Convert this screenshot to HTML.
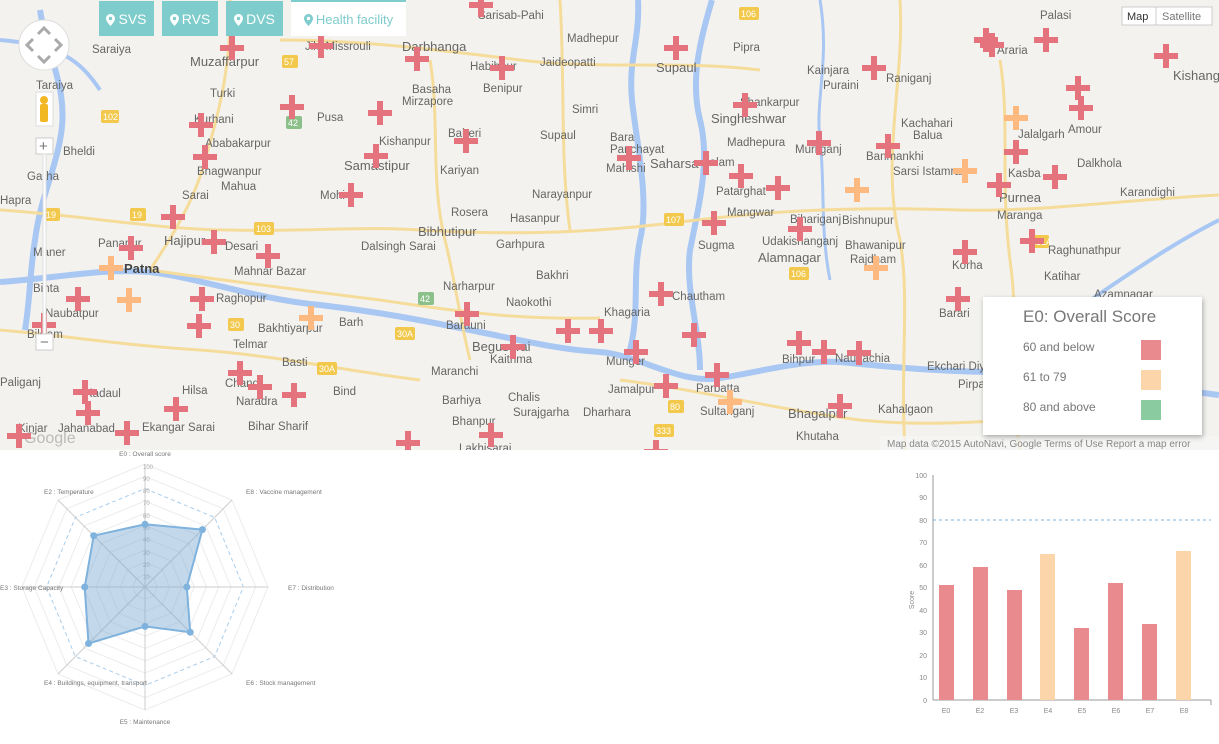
<!DOCTYPE html>
<html><head><meta charset="utf-8">
<style>
html,body{margin:0;padding:0;width:1219px;height:744px;overflow:hidden;background:#fff;font-family:"Liberation Sans",sans-serif;}
#map{position:absolute;left:0;top:0;width:1219px;height:450px;background:#f3f2ee;overflow:hidden;}
.btn{position:absolute;top:1px;height:35px;background:#7ecccb;color:#fff;font-size:14px;line-height:36px;text-align:center;}
.btn svg{vertical-align:-2px;margin-right:3px}
.legend{position:absolute;left:983px;top:297px;width:219px;height:138px;background:#fff;box-shadow:1px 2px 5px rgba(0,0,0,.3);color:#777;}
.legend .t{position:absolute;left:40px;top:10px;font-size:17px;}
.legend .r{position:absolute;left:40px;font-size:12px;}
.legend .s{position:absolute;left:158px;width:20px;height:20px;}
</style></head><body>
<div id="map">
<svg width="1219" height="450" style="position:absolute;left:0;top:0">
<g fill="none" stroke="#a9c7f3" stroke-width="6" stroke-linejoin="round">
<path d="M0,282 C60,278 100,268 150,272 C200,278 260,300 320,305 C380,312 420,320 470,330 C520,340 560,350 600,352 C640,355 680,385 720,378 C760,372 800,360 840,362 C880,366 940,372 1000,372 C1060,370 1140,385 1219,395"/>
<path d="M638,0 C640,40 628,60 632,100 C636,140 650,200 640,240 C632,280 640,310 630,350"/>
<path d="M712,0 C700,40 690,80 700,120 C710,160 700,200 690,250 C685,290 700,330 700,370"/>
<path d="M40,10 C48,60 70,90 60,140 C55,170 40,200 35,240 C30,270 30,300 25,330"/>
<path d="M1219,220 C1180,240 1150,260 1120,280 C1090,300 1060,320 1040,345" stroke-width="4"/>
<path d="M0,40 C60,45 80,60 100,90" stroke-width="4"/>
<path d="M820,0 C830,60 815,100 820,140 C825,180 820,230 830,280" stroke-width="3"/>
</g>
<g fill="none" stroke="#f5dc9a" stroke-width="3">
<path d="M0,210 C80,215 160,230 230,230 C300,232 360,226 420,230 C520,236 600,232 680,222 C760,212 840,206 960,210 C1040,212 1120,200 1219,195"/>
<path d="M230,0 C232,60 220,110 205,160 C195,200 170,240 150,270"/>
<path d="M150,270 C220,280 300,290 380,300 C460,312 520,320 600,318"/>
<path d="M560,0 C565,80 560,160 570,230"/>
<path d="M430,60 C440,120 430,180 445,240 C455,280 460,320 470,360"/>
<path d="M900,0 C905,80 880,160 900,240 C910,300 900,360 905,450"/>
<path d="M1000,60 C1010,120 1000,180 1010,260 C1020,330 1010,400 1020,450"/>
<path d="M0,330 C60,335 120,345 200,350 C280,356 340,370 420,380"/>
<path d="M620,380 C700,390 780,410 860,420 C940,428 1020,420 1100,410"/>
<path d="M280,40 C360,40 440,50 520,60 C600,70 680,60 760,70"/>
</g>
<g font-family="Liberation Sans,sans-serif" font-size="11.5" fill="#666">
<text x="478" y="19">Sarisab-Pahi</text><text x="305" y="50">Jile Missrouli</text><text x="402" y="51" font-size="13">Darbhanga</text>
<text x="92" y="53">Saraiya</text><text x="190" y="66" font-size="13">Muzaffarpur</text><text x="567" y="42">Madhepur</text>
<text x="733" y="51">Pipra</text><text x="656" y="72" font-size="13">Supaul</text><text x="807" y="74">Kainjara</text>
<text x="540" y="66">Jaideopatti</text><text x="470" y="70">Habibpur</text><text x="412" y="93">Basaha</text><text x="402" y="105">Mirzapore</text>
<text x="36" y="89">Taraiya</text><text x="210" y="97">Turki</text><text x="317" y="121">Pusa</text><text x="483" y="92">Benipur</text>
<text x="572" y="113">Simri</text><text x="740" y="106">Shankarpur</text><text x="711" y="123" font-size="13">Singheshwar</text><text x="823" y="89">Puraini</text>
<text x="886" y="82">Raniganj</text><text x="997" y="54">Araria</text><text x="1040" y="19">Palasi</text><text x="1173" y="80" font-size="13">Kishanganj</text>
<text x="1068" y="133">Amour</text><text x="1018" y="138">Jalalgarh</text><text x="901" y="127">Kachahari</text><text x="913" y="139">Balua</text>
<text x="194" y="123">Kurhani</text><text x="205" y="147">Ababakarpur</text><text x="197" y="175">Bhagwanpur</text><text x="63" y="155">Bheldi</text>
<text x="379" y="145">Kishanpur</text><text x="448" y="137">Baheri</text><text x="540" y="139">Supaul</text><text x="610" y="141">Bara</text>
<text x="610" y="153">Panchayat</text><text x="650" y="168" font-size="13">Saharsa</text><text x="702" y="166">Salam</text><text x="727" y="146">Madhepura</text>
<text x="795" y="153">Murliganj</text><text x="866" y="160">Banmankhi</text><text x="893" y="175">Sarsi Istamrar</text><text x="1008" y="177">Kasba</text>
<text x="1077" y="167">Dalkhola</text><text x="1120" y="196">Karandighi</text><text x="999" y="202" font-size="13">Purnea</text><text x="997" y="219">Maranga</text>
<text x="27" y="180">Garha</text><text x="221" y="190">Mahua</text><text x="182" y="199">Sarai</text><text x="344" y="170" font-size="13">Samastipur</text>
<text x="440" y="174">Kariyan</text><text x="532" y="198">Narayanpur</text><text x="606" y="172">Mahishi</text><text x="716" y="195">Patarghat</text>
<text x="842" y="224">Bishnupur</text><text x="0" y="204">Hapra</text><text x="320" y="199">Mohi</text><text x="451" y="216">Rosera</text>
<text x="510" y="222">Hasanpur</text><text x="727" y="216">Mangwar</text><text x="790" y="223">Bihariganj</text><text x="418" y="236" font-size="13">Bibhutipur</text>
<text x="496" y="248">Garhpura</text><text x="361" y="250">Dalsingh Sarai</text><text x="698" y="249">Sugma</text><text x="762" y="245">Udakishanganj</text>
<text x="845" y="249">Bhawanipur</text><text x="850" y="263">Rajdham</text><text x="758" y="262" font-size="13">Alamnagar</text><text x="1048" y="254">Raghunathpur</text>
<text x="33" y="256">Maner</text><text x="98" y="247">Panapur</text><text x="164" y="245" font-size="13">Hajipur</text><text x="225" y="250">Desari</text>
<text x="124" y="273" font-size="13" font-weight="bold" fill="#444">Patna</text><text x="234" y="275">Mahnar Bazar</text><text x="536" y="279">Bakhri</text><text x="952" y="269">Korha</text>
<text x="1044" y="280">Katihar</text><text x="33" y="292">Bihta</text><text x="216" y="302">Raghopur</text><text x="443" y="290">Narharpur</text>
<text x="506" y="306">Naokothi</text><text x="604" y="316">Khagaria</text><text x="672" y="300">Chautham</text><text x="1094" y="298">Azamnagar</text>
<text x="45" y="317">Naubatpur</text><text x="258" y="332">Bakhtiyarpur</text><text x="339" y="326">Barh</text><text x="446" y="329">Barauni</text>
<text x="939" y="317">Barari</text><text x="233" y="348">Telmar</text><text x="27" y="338">Bikram</text><text x="472" y="351" font-size="13">Begusarai</text>
<text x="490" y="363">Kaithma</text><text x="606" y="365">Munger</text><text x="282" y="366">Basti</text><text x="782" y="363">Bihpur</text>
<text x="835" y="362">Naugachia</text><text x="927" y="370">Ekchari Diyara</text><text x="0" y="386">Paliganj</text><text x="431" y="375">Maranchi</text>
<text x="225" y="387">Chandi</text><text x="333" y="395">Bind</text><text x="608" y="393">Jamalpur</text><text x="696" y="392">Parbatta</text>
<text x="958" y="388">Pirpainti</text><text x="85" y="397">Kadaul</text><text x="182" y="394">Hilsa</text><text x="236" y="405">Naradra</text>
<text x="442" y="404">Barhiya</text><text x="508" y="401">Chalis</text><text x="788" y="418" font-size="13">Bhagalpur</text><text x="18" y="432">Kinjar</text>
<text x="58" y="432">Jahanabad</text><text x="142" y="431">Ekangar Sarai</text><text x="248" y="430">Bihar Sharif</text><text x="513" y="416">Surajgarha</text>
<text x="583" y="416">Dharhara</text><text x="700" y="415">Sultanganj</text><text x="878" y="413">Kahalgaon</text><text x="452" y="425">Bhanpur</text>
<text x="796" y="440">Khutaha</text><text x="459" y="452">Lakhisarai</text><text x="24" y="443" font-size="16" fill="#bbb">Google</text>
</g>
<g font-family="Liberation Sans,sans-serif" font-size="9" fill="#fff">
<rect x="101" y="110" width="18" height="13" fill="#f2c94c" rx="2"/><text x="103" y="120">102</text>
<rect x="282" y="55" width="16" height="13" fill="#f2c94c" rx="2"/><text x="284" y="65">57</text>
<rect x="286" y="116" width="16" height="13" fill="#8cc08a" rx="2"/><text x="288" y="126">42</text>
<rect x="739" y="7" width="20" height="13" fill="#f2c94c" rx="2"/><text x="741" y="17">106</text>
<rect x="1157" y="7" width="20" height="13" fill="#f2c94c" rx="2"/><text x="1159" y="17">106</text>
<rect x="44" y="208" width="16" height="13" fill="#f2c94c" rx="2"/><text x="46" y="218">19</text>
<rect x="130" y="208" width="16" height="13" fill="#f2c94c" rx="2"/><text x="132" y="218">19</text>
<rect x="254" y="222" width="20" height="13" fill="#f2c94c" rx="2"/><text x="256" y="232">103</text>
<rect x="664" y="213" width="20" height="13" fill="#f2c94c" rx="2"/><text x="666" y="223">107</text>
<rect x="789" y="267" width="20" height="13" fill="#f2c94c" rx="2"/><text x="791" y="277">106</text>
<rect x="418" y="292" width="16" height="13" fill="#8cc08a" rx="2"/><text x="420" y="302">42</text>
<rect x="228" y="318" width="16" height="13" fill="#f2c94c" rx="2"/><text x="230" y="328">30</text>
<rect x="395" y="327" width="20" height="13" fill="#f2c94c" rx="2"/><text x="397" y="337">30A</text>
<rect x="317" y="362" width="20" height="13" fill="#f2c94c" rx="2"/><text x="319" y="372">30A</text>
<rect x="668" y="400" width="16" height="13" fill="#f2c94c" rx="2"/><text x="670" y="410">80</text>
<rect x="1029" y="235" width="20" height="13" fill="#f2c94c" rx="2"/><text x="1031" y="245">131A</text>
<rect x="654" y="424" width="20" height="13" fill="#f2c94c" rx="2"/><text x="656" y="434">333</text>
</g>
<defs>
<path id="c" d="M-3,-12h6v9h9v6h-9v9h-6v-9h-9v-6h9z"/>
</defs>
<g fill="#e5737d">
<use href="#c" x="481" y="5"/><use href="#c" x="232" y="48"/><use href="#c" x="321" y="46"/><use href="#c" x="417" y="59"/><use href="#c" x="502" y="68"/><use href="#c" x="676" y="48"/>
<use href="#c" x="292" y="107"/><use href="#c" x="380" y="113"/><use href="#c" x="201" y="125"/><use href="#c" x="205" y="157"/><use href="#c" x="466" y="141"/><use href="#c" x="376" y="156"/>
<use href="#c" x="351" y="195"/><use href="#c" x="173" y="217"/><use href="#c" x="214" y="242"/><use href="#c" x="268" y="256"/><use href="#c" x="131" y="248"/><use href="#c" x="78" y="299"/>
<use href="#c" x="202" y="299"/><use href="#c" x="199" y="326"/><use href="#c" x="44" y="325"/><use href="#c" x="467" y="314"/><use href="#c" x="513" y="347"/><use href="#c" x="568" y="331"/>
<use href="#c" x="601" y="331"/><use href="#c" x="636" y="352"/><use href="#c" x="661" y="294"/><use href="#c" x="694" y="335"/><use href="#c" x="629" y="158"/><use href="#c" x="706" y="163"/>
<use href="#c" x="741" y="176"/><use href="#c" x="745" y="105"/><use href="#c" x="778" y="188"/><use href="#c" x="819" y="143"/><use href="#c" x="888" y="146"/><use href="#c" x="874" y="68"/>
<use href="#c" x="714" y="223"/><use href="#c" x="800" y="229"/><use href="#c" x="799" y="343"/><use href="#c" x="824" y="352"/><use href="#c" x="859" y="353"/><use href="#c" x="717" y="375"/>
<use href="#c" x="666" y="386"/><use href="#c" x="840" y="406"/><use href="#c" x="986" y="40"/><use href="#c" x="992" y="45"/><use href="#c" x="1046" y="40"/><use href="#c" x="1166" y="56"/>
<use href="#c" x="1078" y="88"/><use href="#c" x="1081" y="108"/><use href="#c" x="1016" y="152"/><use href="#c" x="999" y="185"/><use href="#c" x="1055" y="177"/><use href="#c" x="965" y="252"/>
<use href="#c" x="1032" y="241"/><use href="#c" x="958" y="299"/><use href="#c" x="240" y="373"/><use href="#c" x="260" y="387"/><use href="#c" x="294" y="395"/><use href="#c" x="85" y="392"/>
<use href="#c" x="88" y="413"/><use href="#c" x="176" y="409"/><use href="#c" x="127" y="433"/><use href="#c" x="408" y="443"/><use href="#c" x="491" y="435"/><use href="#c" x="656" y="452"/><use href="#c" x="19" y="436"/>
</g>
<g fill="#fdb97f">
<use href="#c" x="1016" y="118"/><use href="#c" x="965" y="171"/><use href="#c" x="857" y="190"/><use href="#c" x="876" y="268"/><use href="#c" x="111" y="268"/><use href="#c" x="129" y="300"/><use href="#c" x="311" y="318"/><use href="#c" x="730" y="402"/>
</g>
<circle cx="44" cy="45" r="25" fill="#fff" stroke="#ddd"/>
<g stroke="#aaa" stroke-width="3" fill="none"><path d="M38,34l6,-6 6,6M38,56l6,6 6,-6M33,39l-6,6 6,6M55,39l6,6 -6,6"/></g>
<rect x="36" y="92" width="17" height="34" fill="#fff" stroke="#ddd"/>
<circle cx="44" cy="100" r="4" fill="#f2b824"/><rect x="40" y="104" width="8" height="18" rx="2" fill="#f2b824"/>
<rect x="36" y="138" width="17" height="16" fill="#fff" stroke="#ccc"/><text x="39" y="151" font-size="15" fill="#777" font-family="Liberation Sans">+</text>
<rect x="43" y="154" width="3" height="180" fill="#fff" stroke="#ddd"/>
<rect x="36" y="334" width="17" height="16" fill="#fff" stroke="#ccc"/><text x="40" y="347" font-size="15" fill="#777" font-family="Liberation Sans">−</text>
<rect x="1122" y="7" width="90" height="18" fill="#fff" stroke="#ccc"/><line x1="1156" y1="7" x2="1156" y2="25" stroke="#ccc"/>
<text x="1127" y="20" font-size="11" fill="#333" font-family="Liberation Sans">Map</text><text x="1162" y="20" font-size="11" fill="#777" font-family="Liberation Sans">Satellite</text>
<rect x="880" y="436" width="339" height="14" fill="rgba(245,245,245,.8)"/>
<text x="887" y="447" font-size="10" fill="#888" font-family="Liberation Sans">Map data ©2015 AutoNavi, Google    Terms of Use    Report a map error</text>
</svg>
<div class="btn" style="left:99px;width:55px"><svg width="9" height="12" viewBox="0 0 9 12"><path d="M4.5,0C2,0 0,2 0,4.5C0,7.5 4.5,12 4.5,12S9,7.5 9,4.5C9,2 7,0 4.5,0zM4.5,2.8a1.7,1.7 0 1,1 0,3.4a1.7,1.7 0 1,1 0,-3.4z" fill="currentColor" fill-rule="evenodd"/></svg>SVS</div>
<div class="btn" style="left:162px;width:56px"><svg width="9" height="12" viewBox="0 0 9 12"><path d="M4.5,0C2,0 0,2 0,4.5C0,7.5 4.5,12 4.5,12S9,7.5 9,4.5C9,2 7,0 4.5,0zM4.5,2.8a1.7,1.7 0 1,1 0,3.4a1.7,1.7 0 1,1 0,-3.4z" fill="currentColor" fill-rule="evenodd"/></svg>RVS</div>
<div class="btn" style="left:226px;width:57px"><svg width="9" height="12" viewBox="0 0 9 12"><path d="M4.5,0C2,0 0,2 0,4.5C0,7.5 4.5,12 4.5,12S9,7.5 9,4.5C9,2 7,0 4.5,0zM4.5,2.8a1.7,1.7 0 1,1 0,3.4a1.7,1.7 0 1,1 0,-3.4z" fill="currentColor" fill-rule="evenodd"/></svg>DVS</div>
<div class="btn" style="left:291px;width:115px;background:#fff;color:#7ecccb;border-top:2px solid #7ecccb;top:0;height:34px;font-size:13px"><svg width="9" height="12" viewBox="0 0 9 12"><path d="M4.5,0C2,0 0,2 0,4.5C0,7.5 4.5,12 4.5,12S9,7.5 9,4.5C9,2 7,0 4.5,0zM4.5,2.8a1.7,1.7 0 1,1 0,3.4a1.7,1.7 0 1,1 0,-3.4z" fill="currentColor" fill-rule="evenodd"/></svg>Health facility</div>
<div class="legend">
<div class="t">E0: Overall Score</div>
<div class="r" style="top:43px">60 and below</div><div class="s" style="top:43px;background:#e98a8e"></div>
<div class="r" style="top:73px">61 to 79</div><div class="s" style="top:73px;background:#fdd5aa"></div>
<div class="r" style="top:103px">80 and above</div><div class="s" style="top:103px;background:#8acb9f"></div>
</div>
</div>

<svg width="1219" height="294" style="position:absolute;left:0;top:450px" font-family="Liberation Sans,sans-serif">
<g transform="translate(145,137)">
<g fill="none" stroke="#ececec">
<polygon points="0,-12.3 8.7,-8.7 12.3,0 8.7,8.7 0,12.3 -8.7,8.7 -12.3,0 -8.7,-8.7"/>
<polygon points="0,-24.6 17.4,-17.4 24.6,0 17.4,17.4 0,24.6 -17.4,17.4 -24.6,0 -17.4,-17.4"/>
<polygon points="0,-36.9 26.1,-26.1 36.9,0 26.1,26.1 0,36.9 -26.1,26.1 -36.9,0 -26.1,-26.1"/>
<polygon points="0,-49.2 34.8,-34.8 49.2,0 34.8,34.8 0,49.2 -34.8,34.8 -49.2,0 -34.8,-34.8"/>
<polygon points="0,-61.5 43.5,-43.5 61.5,0 43.5,43.5 0,61.5 -43.5,43.5 -61.5,0 -43.5,-43.5"/>
<polygon points="0,-73.8 52.2,-52.2 73.8,0 52.2,52.2 0,73.8 -52.2,52.2 -73.8,0 -52.2,-52.2"/>
<polygon points="0,-86.1 60.9,-60.9 86.1,0 60.9,60.9 0,86.1 -60.9,60.9 -86.1,0 -60.9,-60.9"/>
<polygon points="0,-110.7 78.3,-78.3 110.7,0 78.3,78.3 0,110.7 -78.3,78.3 -110.7,0 -78.3,-78.3"/>
<polygon points="0,-123 87,-87 123,0 87,87 0,123 -87,87 -123,0 -87,-87"/>
</g>
<polygon points="0,-98.4 69.6,-69.6 98.4,0 69.6,69.6 0,98.4 -69.6,69.6 -98.4,0 -69.6,-69.6" fill="none" stroke="#a9cdeb" stroke-dasharray="4,3"/>
<g stroke="#ccc"><line x1="0" y1="-123" x2="0" y2="123"/><line x1="-123" y1="0" x2="123" y2="0"/><line x1="-87" y1="-87" x2="87" y2="87"/><line x1="87" y1="-87" x2="-87" y2="87"/></g>
<g font-size="6" fill="#aaa"><text x="-2" y="-8">10</text><text x="-2" y="-20">20</text><text x="-2" y="-32">30</text><text x="-2" y="-45">40</text><text x="-2" y="-57">50</text><text x="-2" y="-69">60</text><text x="-2" y="-82">70</text><text x="-2" y="-94">80</text><text x="-2" y="-106">90</text><text x="-2" y="-118">100</text></g>
<polygon points="0,-62.7 57.4,-57.4 41.8,0 45.2,45.2 0,39.4 -56.5,56.5 -60.3,0 -51.3,-51.3" fill="rgba(122,170,210,0.45)" stroke="#7fb2dc" stroke-width="2"/>
<g fill="#7fb2dc"><circle cx="0" cy="-62.7" r="3.5"/><circle cx="57.4" cy="-57.4" r="3.5"/><circle cx="41.8" cy="0" r="3.5"/><circle cx="45.2" cy="45.2" r="3.5"/><circle cx="0" cy="39.4" r="3.5"/><circle cx="-56.5" cy="56.5" r="3.5"/><circle cx="-60.3" cy="0" r="3.5"/><circle cx="-51.3" cy="-51.3" r="3.5"/></g>
<g font-size="6.5" fill="#777">
<text x="0" y="-131" text-anchor="middle">E0 : Overall score</text>
<text x="101" y="-93">E8 : Vaccine management</text>
<text x="143" y="3">E7 : Distribution</text>
<text x="101" y="98">E6 : Stock management</text>
<text x="0" y="137" text-anchor="middle">E5 : Maintenance</text>
<text x="-101" y="98">E4 : Buildings, equipment, transport</text>
<text x="-145" y="3">E3 : Storage Capacity</text>
<text x="-101" y="-93">E2 : Temperature</text>
</g>
</g>
<g font-size="7" fill="#888">
<line x1="933" y1="25" x2="933" y2="250" stroke="#999"/>
<line x1="933" y1="250" x2="1211" y2="250" stroke="#999"/>
<line x1="1211" y1="250" x2="1211" y2="255" stroke="#999"/>
<g text-anchor="end"><text x="927" y="253">0</text><text x="927" y="230">10</text><text x="927" y="208">20</text><text x="927" y="185">30</text><text x="927" y="163">40</text><text x="927" y="140">50</text><text x="927" y="118">60</text><text x="927" y="95">70</text><text x="927" y="73">80</text><text x="927" y="50">90</text><text x="927" y="28">100</text></g>
<line x1="933" y1="70" x2="1211" y2="70" stroke="#7fb2dc" stroke-dasharray="3,3"/>
<text transform="translate(914,150) rotate(-90)" text-anchor="middle">Score</text>
<g fill="#e98a8e">
<rect x="939" y="135" width="15" height="115"/><rect x="973" y="117" width="15" height="133"/><rect x="1007" y="140" width="15" height="110"/>
<rect x="1074" y="178" width="15" height="72"/><rect x="1108" y="133" width="15" height="117"/><rect x="1142" y="174" width="15" height="76"/>
</g>
<g fill="#fdd5aa"><rect x="1040" y="104" width="15" height="146"/><rect x="1176" y="101" width="15" height="149"/></g>
<g text-anchor="middle"><text x="946" y="263">E0</text><text x="980" y="263">E2</text><text x="1014" y="263">E3</text><text x="1048" y="263">E4</text><text x="1082" y="263">E5</text><text x="1116" y="263">E6</text><text x="1150" y="263">E7</text><text x="1184" y="263">E8</text></g>
</g>
</svg>
</body></html>
